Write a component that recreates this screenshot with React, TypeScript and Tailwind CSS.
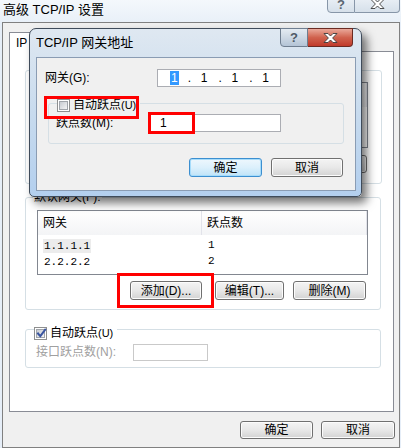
import React from "react";

const font = "font-['Liberation_Sans','Noto_Sans_CJK_SC',sans-serif]";

function Btn({ className, children, focused }: { className: string; children: React.ReactNode; focused?: boolean }) {
  return (
    <div
      className={`flex items-center justify-center rounded-[3px] border text-[12px] leading-none text-black ${
        focused
          ? "border-[#3c8fd0] bg-gradient-to-b from-[#eef7fd] via-[#dcf0fc] to-[#bfe3f8] shadow-[inset_0_0_0_1px_#a6dcfb]"
          : "border-[#707070] bg-gradient-to-b from-[#f4f4f4] via-[#e8e8e8] to-[#d3d3d3] shadow-[inset_0_0_0_1px_#fcfcfc]"
      } ${className}`}
    >
      {children}
    </div>
  );
}

function Check({ checked, disabled }: { checked?: boolean; disabled?: boolean }) {
  return (
    <span className="relative inline-flex h-[13px] w-[13px] shrink-0 items-center justify-center border border-[#8e8f8f] bg-white">
      <span
        className={`h-[9px] w-[9px] border ${
          disabled ? "border-[#c8c8c8]" : "border-[#a0a4aa]"
        } bg-gradient-to-br from-[#c7cbd1] to-[#f4f4f5]`}
      />
      {checked && (
        <svg className="absolute left-[1px] top-[0px]" width="11" height="11" viewBox="0 0 11 11">
          <path d="M2 5.5 L4.3 8.2 L9.2 1.6" fill="none" stroke="#3a55a0" strokeWidth="2" strokeLinecap="square" />
        </svg>
      )}
    </span>
  );
}

function CloseGlyph() {
  return (
    <svg width="17" height="10" viewBox="0 0 17 10">
      <path
        d="M2 0.5 H6 L8.5 3 L11 0.5 H15 L10.6 5 L15 9.5 H11 L8.5 7 L6 9.5 H2 L6.4 5 Z"
        fill="#ffffff"
        stroke="#3b3b3b"
        strokeWidth="0.9"
        strokeLinejoin="round"
      />
    </svg>
  );
}

function ListView({ cols, rows, className }: { cols: string[]; rows: string[][]; className: string }) {
  return (
    <div className={`border border-[#828790] bg-white ${className}`}>
      <div className="flex h-[24px] bg-gradient-to-b from-white to-[#f3f4f6] text-[12px]">
        <div className="flex w-[164px] items-center border-r border-[#e2e3ea] pl-[5px]">{cols[0]}</div>
        <div className="flex flex-1 items-center border-r border-[#e2e3ea] pl-[5px]">{cols[1]}</div>
      </div>
      <div className="pt-[2px]">
        {rows.map((r, i) => (
          <div key={i} className="flex h-[16px] items-center text-[12px]">
            <div className="w-[164px] pl-[5px]">
              <span className={`font-['Liberation_Mono',monospace] text-[11px] ${i === 0 ? "bg-[#ececec] px-[1px] py-[1px]" : "px-[1px]"}`}>
                {r[0]}
              </span>
            </div>
            <div className="pl-[6px] font-['Liberation_Mono',monospace] text-[11px]">{r[1]}</div>
          </div>
        ))}
      </div>
    </div>
  );
}

export default function App() {
  return (
    <div className={`relative h-[448px] w-[401px] overflow-hidden bg-[#e6eef8] ${font}`}>
      {/* outer window title */}
      <div className="flex h-[22px] items-start justify-between bg-gradient-to-b from-[#f4f8fc] to-[#e9f0f8]">
        <div className="pl-[3px] pt-[2px] text-[13px] leading-[16px] text-black">高级 TCP/IP 设置</div>
        <div className="mr-[1px] -mt-[6px] flex">
          <div className="flex h-[19px] w-[28px] items-end justify-center rounded-bl-[4px] border border-[#8796a8] bg-gradient-to-b from-[#eef3f8] to-[#d6e0ea] pb-[1px] text-[13px] font-bold leading-none text-[#5a6570]">
            ?
          </div>
          <div className="flex h-[19px] w-[45px] items-end justify-center rounded-br-[4px] border border-l-0 border-[#8796a8] bg-gradient-to-b from-[#eef3f8] to-[#d6e0ea] pb-[3px]">
            <CloseGlyph />
          </div>
        </div>
      </div>

      {/* outer client */}
      <div className="ml-[2px] h-[426px] w-[398px] border border-[#808080] bg-[#f0f0f0]">
        <div className="flex items-end pl-[6px] pt-[9px]">
          <div className="relative -mb-px flex h-[20px] items-center border border-b-0 border-[#898c95] bg-white px-[6px] text-[12px]">
            IP 设置
          </div>
          <div className="flex h-[18px] items-center border border-b-0 border-l-0 border-[#898c95] bg-gradient-to-b from-[#f2f2f2] to-[#dedede] px-[8px] text-[12px]">
            DNS
          </div>
          <div className="flex h-[18px] items-center border border-b-0 border-l-0 border-[#898c95] bg-gradient-to-b from-[#f2f2f2] to-[#dedede] px-[8px] text-[12px]">
            WINS
          </div>
        </div>

        <div className="ml-[6px] h-[361px] w-[385px] border border-[#898c95] bg-white">
          {/* IP address group */}
          <div className="relative ml-[15px] mt-[18px] h-[114px] w-[357px] rounded-[3px] border border-[#d5dfe5]">
            <div className="absolute -top-[8px] left-[7px] bg-white px-[1px] text-[12px]">IP 地址(R)</div>
            <ListView
              className="ml-[11px] mt-[11px] h-[66px] w-[331px]"
              cols={["IP 地址", "子网掩码"]}
              rows={[["DHCP 已启用", ""]]}
            />
            <div className="mt-[7px] flex justify-end pr-[14px]">
              <Btn className="mr-[13px] h-[18px] w-[72px]">添加(A)...</Btn>
              <Btn className="mr-[9px] h-[18px] w-[69px]">编辑(E)...</Btn>
              <Btn className="h-[18px] w-[73px]">删除(V)</Btn>
            </div>
          </div>

          {/* default gateway group */}
          <div className="relative ml-[15px] mt-[13px] h-[113px] w-[356px] rounded-[3px] border border-[#d5dfe5]">
            <div className="absolute -top-[8px] left-[7px] bg-white px-[1px] text-[12px] leading-[14px]">默认网关(F):</div>
            <ListView
              className="ml-[11px] mt-[12px] h-[65px] w-[331px]"
              cols={["网关", "跃点数"]}
              rows={[
                ["1.1.1.1", "1"],
                ["2.2.2.2", "2"],
              ]}
            />
            <div className="mt-[6px] flex justify-end pr-[14px]">
              <Btn className="mr-[13px] h-[19px] w-[72px]">添加(D)...</Btn>
              <Btn className="mr-[9px] h-[19px] w-[69px]">编辑(T)...</Btn>
              <Btn className="h-[19px] w-[73px]">删除(M)</Btn>
            </div>
            {/* annotation */}
            <div className="absolute left-[91px] top-[75px] h-[35px] w-[97px] border-[3px] border-[#ff0000]" />
          </div>

          {/* auto metric group */}
          <div className="relative ml-[15px] mt-[19px] h-[39px] w-[356px] rounded-[3px] border border-[#d5dfe5]">
            <div className="absolute -top-[4px] left-[8px] flex items-center gap-[3px] bg-white pr-[4px] text-[12px] leading-[14px]">
              <Check checked />
              <span>
                自动跃点<span className="text-[11px]">(U)</span>
              </span>
            </div>
            <div className="mt-[13px] flex items-center">
              <div className="w-[107px] pl-[10px] text-[12px] text-[#a0a0a0]">接口跃点数(N):</div>
              <div className="h-[17px] w-[75px] border border-[#c9c9c9] bg-white" />
            </div>
          </div>
        </div>

        <div className="mt-[9px] flex justify-end pr-[4px]">
          <Btn className="mr-[8px] h-[18px] w-[73px]">确定</Btn>
          <Btn className="h-[18px] w-[74px]">取消</Btn>
        </div>
      </div>

      {/* TCP/IP gateway dialog (window on top) */}
      <div className="absolute left-[29px] top-[28px] z-20 h-[169px] w-[333px] rounded-b-[5px] rounded-t-[7px] border border-[#3f4b5a] bg-gradient-to-b from-[#dfe8f1] via-[#c8dbee] to-[#b3cfee] shadow-[5px_6px_10px_rgba(0,0,0,0.55)]">
        <div className="flex h-[28px] items-start">
          <div className="pl-[6px] pt-[6px] text-[13px] leading-[16px] text-black">TCP/IP 网关地址</div>
          <div className="ml-auto mr-[8px] -mt-px flex">
            <div className="flex h-[19px] w-[28px] items-center justify-center rounded-bl-[4px] border border-[#6f7e90] bg-gradient-to-b from-[#e4ebf2] via-[#cdd8e4] to-[#b4c4d6] text-[13px] font-bold leading-none text-[#4f5a66]">
              ?
            </div>
            <div className="flex h-[19px] w-[45px] items-center justify-center rounded-br-[4px] border border-l-0 border-[#6b2a22] bg-gradient-to-b from-[#e9a89a] via-[#d0624e] to-[#c0392a]">
              <CloseGlyph />
            </div>
          </div>
        </div>

        <div className="relative ml-[6px] h-[134px] w-[320px] border border-[#8a9cb3] bg-[#f0f0f0] pt-[11px]">
          <div className="flex h-[18px] items-center">
            <div className="w-[120px] pl-[8px] text-[12px]">网关(G):</div>
            <div className="flex h-[18px] w-[124px] items-center border border-[#abadb3] bg-white pl-[12px] text-[12px] leading-none">
              <span className="w-[18px]">
                <span className="bg-[#3399ff] px-[1px] text-white">1</span>
              </span>
              <span className="w-[13px]">.</span>
              <span className="w-[18px]">1</span>
              <span className="w-[13px]">.</span>
              <span className="w-[18px]">1</span>
              <span className="w-[13px]">.</span>
              <span className="w-[18px]">1</span>
            </div>
          </div>

          <div className="relative ml-[11px] mt-[16px] h-[41px] w-[296px] rounded-[3px] border border-[#d5dfe5]">
            <div className="absolute -top-[6px] left-[8px] flex items-center gap-[3px] bg-[#f0f0f0] pr-[4px] text-[12px] leading-[14px]">
              <Check />
              <span>
                自动跃点<span className="text-[11px]">(U)</span>
              </span>
            </div>
            <div className="mt-[10px] flex items-center">
              <div className="w-[99px] pl-[7px] text-[12px]">跃点数(M):</div>
              <div className="flex h-[18px] w-[133px] items-center border border-[#abadb3] bg-white pl-[11px] text-[12px]">1</div>
            </div>
          </div>

          <div className="mt-[14px] flex justify-end pr-[12px]">
            <Btn focused className="mr-[9px] h-[19px] w-[73px]">确定</Btn>
            <Btn className="h-[19px] w-[72px]">取消</Btn>
          </div>

          {/* annotations */}
          <div className="absolute left-[7px] top-[38px] h-[23px] w-[95px] border-[3px] border-[#ff0000]" />
          <div className="absolute left-[111px] top-[54px] h-[22px] w-[47px] border-[3px] border-[#ff0000]" />
        </div>
      </div>
    </div>
  );
}
